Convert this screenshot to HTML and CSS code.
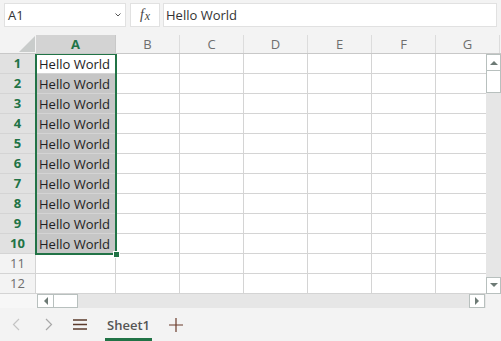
FILE: index.html
```html
<!DOCTYPE html>
<html lang="en">
<head>
    <meta charset="UTF-8" />
    <title>Sheet1</title>
    <link rel="stylesheet" href="styles.css">
</head>
<body>
    <div class="app">
        <!-- Formula bar -->
        <div class="formula-bar">
            <div class="name-box">
                <span>A1</span>
                <svg class="caret" width="6" height="4" viewBox="0 0 6 4"><path d="M0.5 0.5 L3 3 L5.5 0.5" fill="none" stroke="#555" stroke-width="1"/></svg>
            </div>
            <div class="fx-btn"><i>f</i><i class="x">x</i></div>
            <div class="formula-input">Hello World</div>
        </div>

        <!-- Column headers -->
        <div class="col-head">
            <div class="corner"><span class="tri"></span></div>
            <div class="ch active">A</div>
            <div class="ch">B</div>
            <div class="ch">C</div>
            <div class="ch">D</div>
            <div class="ch">E</div>
            <div class="ch">F</div>
            <div class="ch">G</div>
        </div>

        <div class="sheet">
            <div class="grid">
                <div class="row sel"><div class="rh">1</div><div class="cell a active">Hello World</div><div class="cell"></div><div class="cell"></div><div class="cell"></div><div class="cell"></div><div class="cell"></div><div class="cell"></div></div>
                <div class="row sel"><div class="rh">2</div><div class="cell a">Hello World</div><div class="cell"></div><div class="cell"></div><div class="cell"></div><div class="cell"></div><div class="cell"></div><div class="cell"></div></div>
                <div class="row sel"><div class="rh">3</div><div class="cell a">Hello World</div><div class="cell"></div><div class="cell"></div><div class="cell"></div><div class="cell"></div><div class="cell"></div><div class="cell"></div></div>
                <div class="row sel"><div class="rh">4</div><div class="cell a">Hello World</div><div class="cell"></div><div class="cell"></div><div class="cell"></div><div class="cell"></div><div class="cell"></div><div class="cell"></div></div>
                <div class="row sel"><div class="rh">5</div><div class="cell a">Hello World</div><div class="cell"></div><div class="cell"></div><div class="cell"></div><div class="cell"></div><div class="cell"></div><div class="cell"></div></div>
                <div class="row sel"><div class="rh">6</div><div class="cell a">Hello World</div><div class="cell"></div><div class="cell"></div><div class="cell"></div><div class="cell"></div><div class="cell"></div><div class="cell"></div></div>
                <div class="row sel"><div class="rh">7</div><div class="cell a">Hello World</div><div class="cell"></div><div class="cell"></div><div class="cell"></div><div class="cell"></div><div class="cell"></div><div class="cell"></div></div>
                <div class="row sel"><div class="rh">8</div><div class="cell a">Hello World</div><div class="cell"></div><div class="cell"></div><div class="cell"></div><div class="cell"></div><div class="cell"></div><div class="cell"></div></div>
                <div class="row sel"><div class="rh">9</div><div class="cell a">Hello World</div><div class="cell"></div><div class="cell"></div><div class="cell"></div><div class="cell"></div><div class="cell"></div><div class="cell"></div></div>
                <div class="row sel"><div class="rh">10</div><div class="cell a">Hello World</div><div class="cell"></div><div class="cell"></div><div class="cell"></div><div class="cell"></div><div class="cell"></div><div class="cell"></div></div>
                <div class="row"><div class="rh">11</div><div class="cell a"></div><div class="cell"></div><div class="cell"></div><div class="cell"></div><div class="cell"></div><div class="cell"></div><div class="cell"></div></div>
                <div class="row"><div class="rh">12</div><div class="cell a"></div><div class="cell"></div><div class="cell"></div><div class="cell"></div><div class="cell"></div><div class="cell"></div><div class="cell"></div></div>

                <!-- selection outline A1:A10 -->
                <div class="selection"><span class="handle"></span></div>
            </div>

            <div class="vscroll">
                <div class="sb-btn up"><svg width="8" height="5" viewBox="0 0 8 5"><path d="M0 5 L4 1 L8 5 Z" fill="#6d7a75"/></svg></div>
                <div class="sb-thumb-v"></div>
                <div class="sb-fill"></div>
                <div class="sb-btn down"><svg width="8" height="5" viewBox="0 0 8 5"><path d="M0 0 L4 4 L8 0 Z" fill="#6d7a75"/></svg></div>
            </div>
        </div>

        <div class="hscroll-row">
            <div class="hs-gap"></div>
            <div class="hscroll">
                <div class="sb-btn left"><svg width="5" height="8" viewBox="0 0 5 8"><path d="M5 0 L1 4 L5 8 Z" fill="#6d7a75"/></svg></div>
                <div class="sb-thumb-h"></div>
                <div class="sb-fill"></div>
                <div class="sb-btn right"><svg width="5" height="8" viewBox="0 0 5 8"><path d="M0 0 L4 4 L0 8 Z" fill="#6d7a75"/></svg></div>
            </div>
            <div class="hs-corner"></div>
        </div>

        <!-- Sheet tabs -->
        <div class="tabs">
            <span class="nav prev"><svg width="8" height="13" viewBox="0 0 8 13"><path d="M7 1 L1.5 6.5 L7 12" fill="none" stroke="#c4c4c4" stroke-width="1.2"/></svg></span>
            <span class="nav next"><svg width="8" height="13" viewBox="0 0 8 13"><path d="M1 1 L6.5 6.5 L1 12" fill="none" stroke="#a8a8a8" stroke-width="1.2"/></svg></span>
            <span class="menu"><svg width="14" height="11" viewBox="0 0 14 11"><path d="M0 1 H14 M0 5.5 H14 M0 10 H14" stroke="#5b3b2c" stroke-width="1.3"/></svg></span>
            <span class="tab">Sheet1</span>
            <span class="add"><svg width="14" height="14" viewBox="0 0 14 14"><path d="M7 0 V14 M0 7 H14" stroke="#6b3b2a" stroke-width="1.2"/></svg></span>
        </div>
    </div>
</body>
</html>
```

FILE: styles.css
```css
:root {
    --green: #217346;
    --grid-line: #d4d4d4;
    --head-bg: #f3f3f3;
    --sb-border: #b8c0be;
    --track: #e6e6e6;
}

* {
    margin: 0;
    padding: 0;
    box-sizing: border-box;
}

body {
    width: 501px;
    height: 341px;
    overflow: hidden;
    background: var(--head-bg);
    font-family: 'Segoe UI', 'Open Sans', sans-serif;
    font-size: 13px;
    color: #222;
}

.app {
    width: 501px;
    height: 341px;
    display: flex;
    flex-direction: column;
}

/* Formula bar */
.formula-bar {
    height: 35px;
    display: flex;
    padding: 3px 4px 0 4px;
}

.name-box,
.fx-btn,
.formula-input {
    height: 24px;
    background: #fff;
    border: 1px solid #e1e1e1;
    display: flex;
    align-items: center;
}

.name-box {
    width: 122px;
    padding: 0 3px 0 3px;
    justify-content: space-between;
    color: #333;
}

.name-box .caret {
    margin-right: 1px;
}

.fx-btn {
    width: 30px;
    margin-left: 4px;
    justify-content: center;
    font-family: 'Liberation Serif', serif;
    font-size: 14px;
    color: #444;
}

.fx-btn .x {
    font-size: 12px;
    margin-left: 1px;
    margin-top: 2px;
}

.formula-input {
    flex: 1;
    margin-left: 3px;
    padding-left: 2px;
    color: #333;
}

/* Column header */
.col-head {
    height: 19px;
    display: flex;
    background: var(--head-bg);
    border-bottom: 1px solid #c8c8c8;
    overflow: hidden;
}

.corner {
    width: 36px;
    flex: none;
    position: relative;
}

.corner .tri {
    position: absolute;
    right: 1px;
    bottom: 1px;
    width: 0;
    height: 0;
    border-left: 16px solid transparent;
    border-bottom: 16px solid #c9cccb;
}

.ch {
    width: 64px;
    flex: none;
    border-right: 1px solid #dcdcdc;
    text-align: center;
    line-height: 18px;
    color: #6e6e6e;
}

.ch.active {
    width: 80px;
    background: #d3d3d3;
    color: var(--green);
    font-weight: 700;
    border-right-color: #c8c8c8;
}

/* Sheet body */
.sheet {
    display: flex;
    height: 240px;
}

.grid {
    width: 486px;
    overflow: hidden;
    position: relative;
    background: #fff;
}

.row {
    height: 20px;
    display: flex;
}

.rh {
    width: 36px;
    flex: none;
    background: var(--head-bg);
    border-right: 1px solid var(--grid-line);
    border-bottom: 1px solid var(--grid-line);
    text-align: center;
    line-height: 19px;
    color: #6e6e6e;
}

.row.sel .rh {
    background: #e1e1e1;
    color: var(--green);
    font-weight: 700;
}

.cell {
    width: 64px;
    flex: none;
    border-right: 1px solid var(--grid-line);
    border-bottom: 1px solid var(--grid-line);
    line-height: 20px;
    padding-left: 3px;
    white-space: nowrap;
    overflow: hidden;
}

.cell.a {
    width: 80px;
}

.row.sel .cell.a {
    background: #c6c6c6;
}

.row.sel .cell.a.active {
    background: #fff;
}

.selection {
    position: absolute;
    left: 35px;
    top: -1px;
    width: 82px;
    height: 202px;
    border: 2px solid var(--green);
    pointer-events: none;
}

.handle {
    position: absolute;
    right: -4px;
    bottom: -4px;
    width: 5px;
    height: 5px;
    background: var(--green);
    border: 1px solid #fff;
    box-sizing: content-box;
    margin: -1px;
}

/* Scrollbars */
.vscroll {
    width: 15px;
    display: flex;
    flex-direction: column;
    background: var(--track);
}

.sb-btn {
    background: #fff;
    border: 1px solid var(--sb-border);
    display: flex;
    align-items: center;
    justify-content: center;
    flex: none;
}

.vscroll .sb-btn {
    height: 17px;
}

.sb-thumb-v {
    height: 22px;
    background: #fff;
    border: 1px solid var(--sb-border);
    border-top: none;
}

.sb-fill {
    flex: 1;
}

.hscroll-row {
    height: 14px;
    display: flex;
}

.hs-gap {
    width: 37px;
    background: #f7f7f7;
}

.hscroll {
    width: 449px;
    display: flex;
    background: var(--track);
}

.hscroll .sb-btn {
    width: 17px;
}

.hscroll .sb-btn.right {
    width: 16px;
    margin-right: 1px;
}

.sb-thumb-h {
    width: 24px;
    background: #fff;
    border: 1px solid var(--sb-border);
    border-left: none;
}

.hs-corner {
    flex: 1;
    background: var(--head-bg);
}

/* Tabs */
.tabs {
    flex: 1;
    display: flex;
    align-items: center;
    background: var(--head-bg);
}

.nav {
    display: flex;
}

.nav.prev {
    margin-left: 12px;
}

.nav.next {
    margin-left: 25px;
}

.menu {
    display: flex;
    margin-left: 20px;
}

.tab {
    margin-left: 18px;
    padding: 3px 2px 0 2px;
    height: 100%;
    display: flex;
    align-items: center;
    font-size: 13px;
    font-weight: 600;
    color: #555;
    border-bottom: 3px solid var(--green);
}

.add {
    display: flex;
    margin-left: 17px;
}
```
